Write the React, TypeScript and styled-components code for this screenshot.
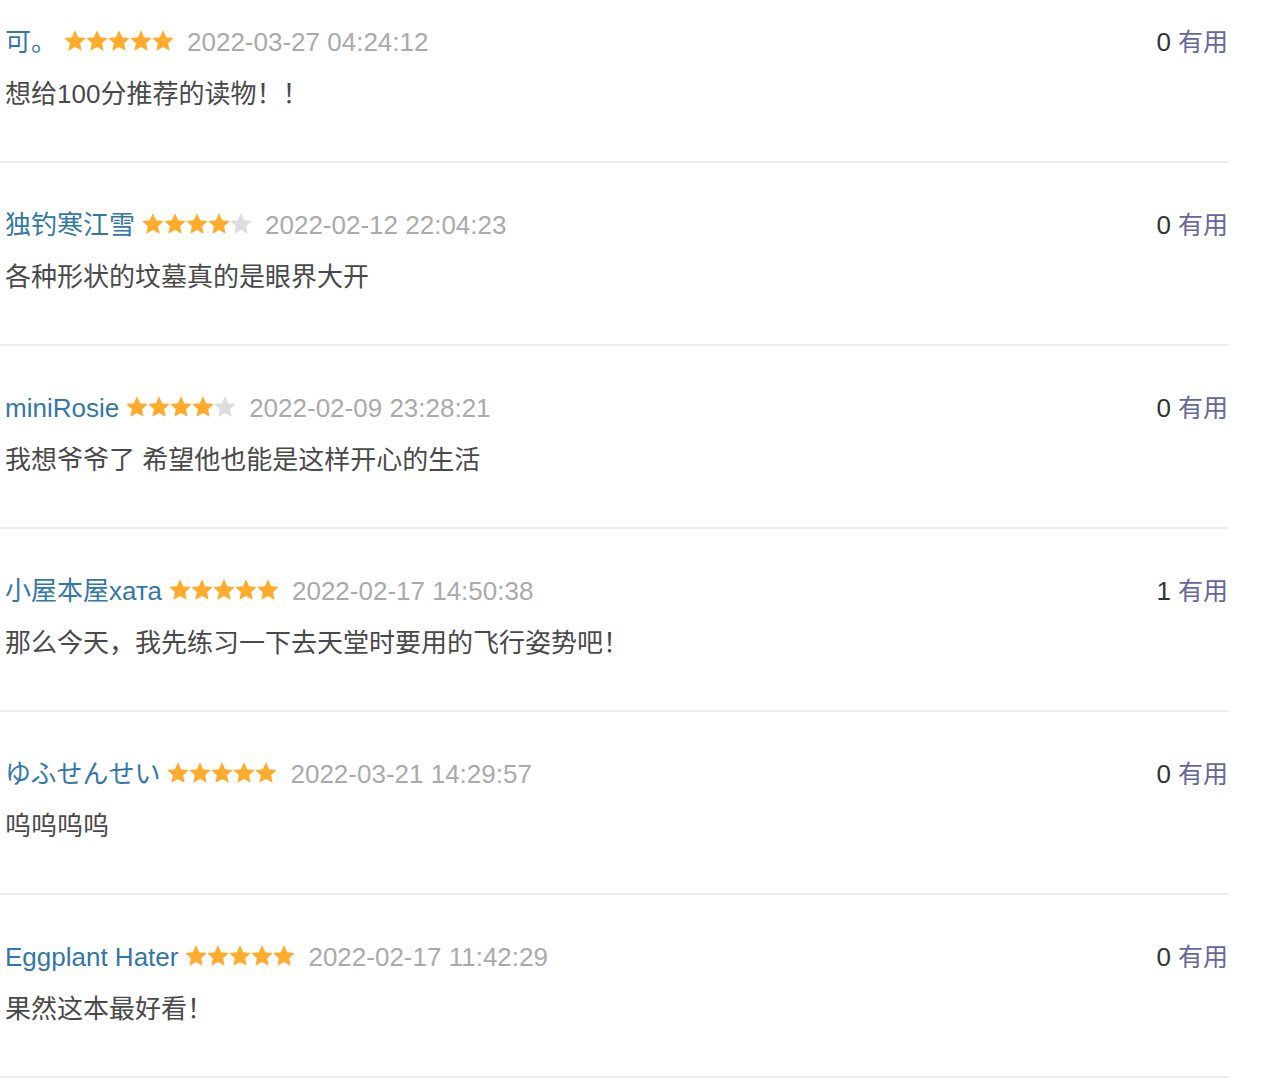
import React from "react";
import styled, { createGlobalStyle } from "styled-components";

const GlobalStyle = createGlobalStyle`
  body {
    margin: 0;
    background: #fff;
    font-family: "Liberation Sans", "Noto Sans CJK SC", "Noto Sans CJK JP", sans-serif;
  }
`;

type Review = {
  name: string;
  stars: number;
  time: string;
  votes: number;
  text: string;
};

const reviews: Review[] = [
  { name: "可。", stars: 5, time: "2022-03-27 04:24:12", votes: 0, text: "想给100分推荐的读物！！" },
  { name: "独钓寒江雪", stars: 4, time: "2022-02-12 22:04:23", votes: 0, text: "各种形状的坟墓真的是眼界大开" },
  { name: "miniRosie", stars: 4, time: "2022-02-09 23:28:21", votes: 0, text: "我想爷爷了 希望他也能是这样开心的生活" },
  { name: "小屋本屋xата", stars: 5, time: "2022-02-17 14:50:38", votes: 1, text: "那么今天，我先练习一下去天堂时要用的飞行姿势吧！" },
  { name: "ゆふせんせい", stars: 5, time: "2022-03-21 14:29:57", votes: 0, text: "呜呜呜呜" },
  { name: "Eggplant Hater", stars: 5, time: "2022-02-17 11:42:29", votes: 0, text: "果然这本最好看！" },
];

const List = styled.ul`
  list-style: none;
  margin: 0;
  padding: 0;
  width: 1229px;
`;

const Item = styled.li`
  padding: 44px 0 49px 5px;
  border-bottom: 2px solid #ededed;
  &:first-child {
    padding-top: 24px;
  }
`;

const Header = styled.div`
  display: flex;
  align-items: center;
  height: 36px;
  line-height: 36px;
`;

const Name = styled.a`
  font-size: 26px;
  color: #3377aa;
  text-decoration: none;
  margin-right: 7px;
`;

const Stars = styled.span`
  display: inline-flex;
  margin-right: 13px;
  margin-top: -3px;
`;

const Time = styled.span`
  font-size: 26px;
  color: #aaaaaa;
`;

const Votes = styled.span`
  margin-left: auto;
  margin-right: 1px;
  font-size: 26px;
  color: #333;
`;

const Useful = styled.a`
  color: #66669e;
  font-size: 25px;
  margin-left: 7px;
  text-decoration: none;
`;

const Comment = styled.p`
  margin: 16px 0 0;
  font-size: 26px;
  line-height: 36px;
  color: #494949;
`;

const Star = ({ on }: { on: boolean }) => (
  <svg width="22" height="22" viewBox="0.6 0.6 22.8 22.8">
    <polygon
      points="12,0.8 15.3,8.1 23.2,9 17.3,14.3 18.9,22.2 12,18.2 5.1,22.2 6.7,14.3 0.8,9 8.7,8.1"
      fill={on ? "#ffac2d" : "#dddddd"}
    />
  </svg>
);

export default function App() {
  return (
    <>
      <GlobalStyle />
      <List>
        {reviews.map((r) => (
          <Item key={r.time}>
            <Header>
              <Name href="#">{r.name}</Name>
              <Stars>
                {[0, 1, 2, 3, 4].map((i) => (
                  <Star key={i} on={i < r.stars} />
                ))}
              </Stars>
              <Time>{r.time}</Time>
              <Votes>
                {r.votes}
                <Useful href="#">有用</Useful>
              </Votes>
            </Header>
            <Comment>{r.text}</Comment>
          </Item>
        ))}
      </List>
    </>
  );
}
